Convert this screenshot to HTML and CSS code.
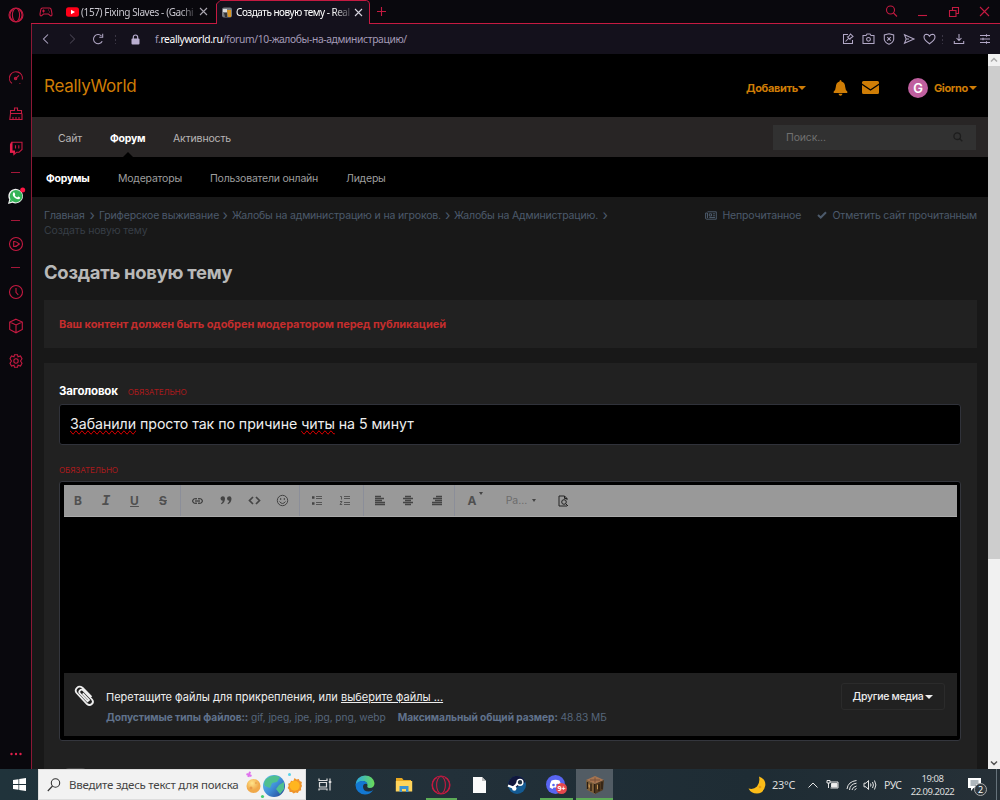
FILE: index.html
```html
<!DOCTYPE html>
<html lang="ru">
<head>
<meta charset="utf-8">
<title>Создать новую тему - ReallyWorld</title>
<link rel="stylesheet" href="styles.css">
</head>
<body>
<div class="desktop">
<div class="browser">
  <aside class="sidebar">
    <svg class="s" width="16" height="16" viewBox="0 0 16 16"><circle cx="8" cy="8" r="7"/><ellipse cx="8" cy="8" rx="3.6" ry="6.8"/><path d="M5 2.2A7 7 0 0 0 5 13.8M11 2.2A7 7 0 0 1 11 13.8" /></svg>
    <span></span>
    <svg class="s" width="16" height="16" viewBox="0 0 16 16"><path d="M4 13.4A6.5 6.5 0 1 1 14.3 9.5M11.5 13.5h.8M7.3 8.8 11 5.4"/><circle cx="7.6" cy="8.5" r="1.2"/></svg>
    <svg class="s" width="16" height="16" viewBox="0 0 16 16"><path d="M2.5 7.5V4.5H6.5V2H9.5V4.5H13.5V7.5ZM2.5 7.5 1.8 13.5H14V7.5M5 13.5V11M8 13.5V11M11 13.5V11"/></svg>
    <svg class="s" width="16" height="16" viewBox="0 0 16 16"><path d="M3.500 2.300H14V9.500L11 12.300H8.500L6 14.600V12.300H2.500V4.500Z"/><path class="fillred" d="M2 4.300 4.500 1.800V10.500H7V12.500L5.500 15V12.800H2Z"/><path d="M7.500 5.300V8.500M10.800 5.300V8.500"/></svg>
    <i class="dash"></i>
    <svg width="18" height="18" viewBox="0 0 18 18"><path d="M1 17 2.2 12.6A7.3 7.3 0 1 1 5.4 15.7Z" fill="#eee"/><circle cx="9" cy="9.2" r="6.2" fill="#34b457"/><path d="M2.5 15.3 3.6 12 5.5 14.4Z" fill="#34b457"/><path d="M6.2 5.7q1-1 1.7.9t-.2 1.6q1 1.8 2.6 2.3.8-1.3 1.6-.8 1.8.8 1.2 1.5-1.3 2-4.7 0Q4.600 8.500 6.200 5.700" fill="#fff"/><circle cx="15.7" cy="3" r="2.500" fill="#ff1744"/></svg>
    <i class="dash"></i>
    <svg class="s" width="16" height="16" viewBox="0 0 16 16"><circle cx="8" cy="8" r="6.500"/><path d="M5.700 5.500Q8 5 11.300 8 8 11 5.700 10.500Z"/></svg>
    <i class="dash"></i>
    <svg class="s" width="16" height="16" viewBox="0 0 16 16"><circle cx="8" cy="8" r="6.500"/><path d="M8 4V8.300L10.300 11"/></svg>
    <svg class="s" width="16" height="16" viewBox="0 0 16 16"><path d="M8 1.200 14.300 4V11.500L8 14.800 1.700 11.500V4ZM1.700 4 8 7 14.300 4M8 7V14.800"/></svg>
    <svg class="s" width="16" height="16" viewBox="0 0 16 16"><path d="M6.500 1.700H9.500L10 3.700 12.500 3 14 5.700 12.500 8 14 10.300 12.500 13 10 12.300 9.500 14.300H6.500L6 12.300 3.500 13 2 10.300 3.500 8 2 5.700 3.500 3 6 3.700Z"/><circle cx="8" cy="8" r="2.200"/></svg>
    <span></span>
    <svg width="14" height="4" viewBox="0 0 14 4" fill="#e0204b"><circle cx="2.500" cy="2" r="1.200"/><circle cx="7" cy="2" r="1.200"/><circle cx="11.500" cy="2" r="1.200"/></svg>
  </aside>

  <div class="window">
    <div class="tabs">
      <svg class="s pad" width="14" height="12" viewBox="0 0 14 12"><path d="M3.500 2H10.500Q12 2 12.300 4L13 8Q13 10.300 11.500 9.800L9.500 8H4.500L2.500 9.800Q1 10.300 1 8L1.700 4Q2 2 3.500 2ZM4.500 3.500V6.500M3 5H6M9 4h.8M10 6h.8"/></svg>
      <svg class="yt" width="13" height="10" viewBox="0 0 13 10"><rect width="13" height="9.500" y=".2" rx="2.500" fill="#ff0018"/><path d="M5 2.700 9 5 5 7.300Z" fill="#fff"/></svg>
      <span class="tab-title fade1">(157) Fixing Slaves - (Gachi</span>
      <svg class="x" width="9" height="9" viewBox="0 0 9 9"><path d="M1 1 8 8M8 1 1 8"/></svg>
      <div class="tab-active">
        <svg class="edge" width="155" height="24" viewBox="0 0 155 24"><path d="M.5 24V4L4 .5H150.500Q153.500 1 153.500 4V24" fill="#14111c" stroke="#c51a41"/></svg>
        <svg class="fav" width="10" height="11" viewBox="0 0 10 11"><rect width="10" height="10" y=".5" rx="2" fill="#777a80"/><path d="M1 2H5V5H1Z" fill="#ddd"/><path d="M5 3H9V10H6Z" fill="#d99522"/><path d="M2 6H5V10H3Z" fill="#333"/></svg>
        <span class="tab-title on">Создать новую тему - Real</span>
        <svg class="x" width="9" height="9" viewBox="0 0 9 9"><path d="M1 1 8 8M8 1 1 8"/></svg>
      </div>
      <svg class="s plus" width="11" height="11" viewBox="0 0 11 11"><path d="M5.500 1V10M1 5.500H10"/></svg>
      <div class="wincontrols">
        <svg class="s" width="13" height="13" viewBox="0 0 13 13"><circle cx="5.500" cy="5" r="4"/><path d="M8.500 8 12 11.500"/></svg>
        <svg class="s" width="11" height="13" viewBox="0 0 11 13"><path d="M1 10.500H10"/></svg>
        <svg class="s" width="12" height="12" viewBox="0 0 12 12"><path d="M1.500 4.500H8V10.500H1.500ZM4.500 4V1.500H10.500V7.500H8.500"/></svg>
        <svg class="s" width="11" height="11" viewBox="0 0 11 11"><path d="M1 1 10 10M10 1 1 10"/></svg>
      </div>
    </div>

    <div class="view">
      <div class="address">
        <svg class="a" width="12" height="12" viewBox="0 0 12 12"><path d="M8 1.500 3.500 6 8 10.500"/></svg>
        <svg class="a dim" width="12" height="12" viewBox="0 0 12 12"><path d="M4 1.500 8.500 6 4 10.500"/></svg>
        <svg class="a" width="12" height="12" viewBox="0 0 12 12"><path d="M10.200 8.200A4.600 4.600 0 1 1 9.500 3M10.700 .8V4.200H7.300"/></svg>
        <i class="vdots"></i>
        <svg width="9" height="11" viewBox="0 0 9 11"><path d="M2.300 5V3.200Q2.300 1 4.500 1T6.700 3.200V5" fill="none" stroke="#b9aed0" stroke-width="1.200"/><rect x=".5" y="4.500" width="8" height="6" rx="1" fill="#b9aed0"/></svg>
        <span class="url">f.<b>reallyworld.ru</b>/forum/10-жалобы-на-администрацию/</span>
        <svg class="a" width="12" height="12" viewBox="0 0 12 12"><path d="M6 1.500H1.500V10.500H10.500V7M3.500 8.500 6.500 5.500M5 3.500 8.500 7M6 4.500 8.500 1 11 3.500 7.500 6"/></svg>
        <svg class="a" width="13" height="12" viewBox="0 0 13 12"><path d="M1 2.500H4L5 1H8L9 2.500H12V10.500H1Z"/><circle cx="6.500" cy="6.300" r="1.900"/></svg>
        <svg class="a" width="12" height="12" viewBox="0 0 12 12"><path d="M6 .8 10.700 2V6.500Q10.200 9.500 6 11.300 1.800 9.500 1.300 6.500V2ZM4.200 4 7.800 7.600M7.800 4 4.200 7.600"/></svg>
        <svg class="a" width="12" height="12" viewBox="0 0 12 12"><path d="M1.500 1.700 11 6 1.500 10.300 3.200 6ZM3.200 6H6"/></svg>
        <svg class="a" width="13" height="12" viewBox="0 0 13 12"><path d="M6.500 10.800Q1 7 1 4 1 1.300 3.500 1.200 5.500 1.200 6.500 3.200 7.500 1.200 9.500 1.200 12 1.300 12 4 12 7 6.500 10.800Z"/></svg>
        <i class="vdots"></i>
        <svg class="a" width="12" height="12" viewBox="0 0 12 12"><path d="M6 1V7.500M3.500 5 6 7.500 8.500 5M1.300 8V10.500H10.700V8"/></svg>
        <svg class="a" width="12" height="12" viewBox="0 0 12 12"><path d="M1 2.500H11M1 6H11M1 9.500H11M7.500 1.300V3.700M4 4.800V7.200M7.500 8.300V10.700"/></svg>
      </div>

      <div class="viewport">
        <div class="page">
          <header class="head">
            <a class="logo">ReallyWorld</a>
            <span class="add">Добавить</span><i class="caret"></i>
            <svg class="bell" width="15" height="16" viewBox="0 0 15 16" fill="#cf7d06"><path d="M7.500 0Q8.500 0 8.500 1.500 12 2.300 12.200 7 12.400 10 14.300 11.500V13H.7V11.500Q2.600 10 2.800 7 3 2.300 6.500 1.500 6.500 0 7.500 0ZM5.500 13.800H9.500Q9 15.800 7.500 15.800T5.500 13.800Z"/></svg>
            <svg class="mail" width="17" height="13" viewBox="0 0 17 13" fill="#cf7d06"><path d="M1.500 0H15.500Q17 0 17 1.500V2.500L8.500 8.200 0 2.500V1.500Q0 0 1.500 0ZM0 4 8.500 9.700 17 4V11.500Q17 13 15.500 13H1.500Q0 13 0 11.500Z"/></svg>
            <span class="avatar">G</span>
            <span class="user">Giorno</span><i class="caret"></i>
          </header>
          <nav class="nav">
            <a>Сайт</a><a class="sel">Форум</a><a class="act">Активность</a>
            <div class="search"><span>Поиск...</span><svg width="10" height="10" viewBox="0 0 10 10"><circle cx="4.200" cy="4.200" r="3.300"/><path d="M6.700 6.700 9.300 9.300"/></svg></div>
          </nav>
          <nav class="subnav"><a class="sel">Форумы</a><a>Модераторы</a><a>Пользователи онлайн</a><a>Лидеры</a></nav>

          <div class="content">
            <div class="crumbbar">
              <div class="crumbs">
                <span class="c1">Главная</span><i>›</i><span class="c2">Гриферское выживание</span><i>›</i><span class="c3">Жалобы на администрацию и на игроков.</span><i>›</i><span class="c4">Жалобы на Администрацию.</span><i>›</i>
                <span class="here">Создать новую тему</span>
              </div>
              <svg class="news" width="12" height="9" viewBox="0 0 12 9"><path d="M2.500 .8H11.300V8.200H1.500Q.6 8.200 .6 7V2H2.500V7M4.300 2.800H6.500V5H4.300ZM7.800 2.800H10M7.800 4.800H10M4.300 6.500H10"/></svg>
              <span class="unread">Непрочитанное</span>
              <svg class="check" width="10" height="8" viewBox="0 0 10 8"><path d="M1 4 3.700 6.500 9 1.200"/></svg>
              <span class="markread">Отметить сайт прочитанным</span>
            </div>
            <h1>Создать новую тему</h1>
            <div class="notice">Ваш контент должен быть одобрен модератором перед публикацией</div>
            <form class="form">
              <div class="label"><b>Заголовок</b><em>ОБЯЗАТЕЛЬНО</em></div>
              <div class="title-input"><u>Забанили</u> просто так по причине <u>читы</u> на 5 минут</div>
              <div class="label second"><em>ОБЯЗАТЕЛЬНО</em></div>
              <div class="editor">
                <div class="tools">
                  <b class="t">B</b><b class="t it">I</b><b class="t un">U</b><b class="t st">S</b>
                  <svg class="sep k" width="11" height="6" viewBox="0 0 11 6"><path d="M5 .8H2.500Q.7 .8 .7 3T2.500 5.200H5M6 .8H8.500Q10.300 .8 10.300 3T8.500 5.200H6M3 3H8" stroke="#222" stroke-width="1"/></svg>
                  <svg width="12" height="9" viewBox="0 0 12 9" fill="#444"><path d="M.5 2.700A2.200 2.200 0 1 1 5 2.500Q5 6.500 1.500 8.300L1 7.500Q2.800 6 2.800 4.800 .7 4.800 .5 2.700ZM7 2.700A2.200 2.200 0 1 1 11.500 2.500Q11.500 6.500 8 8.300L7.500 7.500Q9.300 6 9.300 4.800 7.200 4.800 7 2.700Z"/></svg>
                  <svg class="k" width="13" height="9" viewBox="0 0 13 9"><path d="M5 1 1.500 4.500 5 8M8 1 11.500 4.500 8 8" stroke-width="1.700"/></svg>
                  <svg class="k" width="13" height="13" viewBox="0 0 13 13"><circle cx="6.500" cy="6.500" r="5.200"/><path d="M4.700 4V6M8.300 4V6M3.500 7.500Q6.500 11.500 9.500 7.500"/></svg>
                  <svg class="k sep" width="12" height="11" viewBox="0 0 12 11"><path d="M5 1.500H11M5 3.500H11M5 7.500H11M5 9.500H11" stroke-width=".8"/><path d="M1 2.500H3.500M1 8.500H3.500" stroke-width="2.500"/></svg>
                  <svg class="k" width="12" height="11" viewBox="0 0 12 11"><path d="M5 1.500H11M5 3.500H11M5 7.500H11M5 9.500H11M1.200 1.500H2.500V4.500M1 6.500H3L1 9.500H3.200" stroke-width=".8"/></svg>
                  <svg class="k bars sep" width="10" height="9" viewBox="0 0 10 9"><path d="M0 .5H6M0 2.500H9M0 4.500H7M0 6.500H10M0 8.500H10"/></svg>
                  <svg class="k bars" width="10" height="9" viewBox="0 0 10 9"><path d="M2 .5H8M0 2.500H10M2 4.500H8M0 6.500H10M2 8.500H8"/></svg>
                  <svg class="k bars" width="10" height="9" viewBox="0 0 10 9"><path d="M4 .5H10M1 2.500H10M3 4.500H10M0 6.500H10M0 8.500H10"/></svg>
                  <span class="sep color"><b class="t">A</b><i></i></span>
                  <span class="para">Pa...<i></i></span>
                  <svg class="k" width="11" height="12" viewBox="0 0 11 12"><path d="M9 11H1V1H6.500L9 3.500V5M6.500 1V3.500H9" stroke="#222"/><circle cx="6" cy="7" r="2.300" stroke="#222"/><path d="M7.700 8.700 10 11" stroke="#222"/></svg>
                </div>
                <div class="body"></div>
                <div class="attach">
                  <svg class="clip" width="21" height="22" viewBox="0 0 21 22"><path d="M17.500 12 8.500 2.800Q5.500 .5 3 2.800T2.700 8L13 19Q15.500 21 17.800 19T18 14.500L9.200 5.300Q7.400 4 6 5.300T5.800 8.300L13.500 16.300 15 15 8.700 8.300"/></svg>
                  <div class="attext">
                    <div class="drop">Перетащите файлы для прикрепления, или <u>выберите файлы ...</u></div>
                    <div class="types"><span class="ty"><b>Допустимые типы файлов::</b> gif, jpeg, jpe, jpg, png, webp</span><span><b>Максимальный общий размер:</b> 48.83 МБ</span></div>
                  </div>
                  <div class="media">Другие медиа<i class="caret"></i></div>
                </div>
              </div>
              <div class="toggle"></div>
            </form>
          </div>
        </div>
        <div class="scroll"><svg width="12" height="12" viewBox="0 0 12 12"><path d="M3 7.500 6 4.500 9 7.500" stroke="#aaa"/></svg><div class="thumb"></div><svg class="down" width="12" height="12" viewBox="0 0 12 12"><path d="M3 4.500 6 7.500 9 4.500" stroke="#555"/></svg></div>
      </div>
    </div>
  </div>
</div>

<footer class="taskbar">
  <div class="cell"><svg width="13" height="13" viewBox="0 0 13 13" fill="#fff"><path d="M0 2 5.500 1.200V6.100H0ZM6.200 1.100 13 0V6.100H6.200ZM0 6.900H5.500V11.800L0 11ZM6.200 6.900H13V13L6.200 11.900Z"/></svg></div>
  <div class="tsearch">
    <svg width="14" height="14" viewBox="0 0 14 14" fill="none" stroke="#333" stroke-width="1.100"><circle cx="8.500" cy="5" r="4.200"/><path d="M5.500 8 .8 13"/></svg>
    <span>Введите здесь текст для поиска</span>
    <svg class="planets" width="56" height="28" viewBox="0 0 56 28"><defs><radialGradient id="y" cx=".4" cy=".3"><stop offset="0" stop-color="#ffe48a"/><stop offset="1" stop-color="#f0a94a"/></radialGradient><linearGradient id="e" x1="0" x2="1" y2="1"><stop offset="0" stop-color="#6ac8ec"/><stop offset=".5" stop-color="#3f8fd8"/><stop offset="1" stop-color="#243f90"/></linearGradient></defs><circle cx="7.500" cy="15" r="7" fill="url(#y)"/><circle cx="5" cy="17" r="1.500" fill="#e89a48"/><circle cx="10" cy="12" r="1.200" fill="#edaa52"/><circle cx="28" cy="15" r="11" fill="url(#e)"/><path d="M20 8Q27 2 34 6L31 11 26 12 24 17 19 15Q17 12 20 8ZM33 14 38 11 38 18 34 23 30 18Z" fill="#4fc08f"/><path d="m48.500 7 2 1.400 2.300-.5.9 2.200 2.200.9-.5 2.300L56 15l-1 2 .2 2.300-2.300.6-1 2-2.300-.5-2 1.200-1.700-1.500-2.300-.1-.4-2.300-1.600-1.600 1.100-2.100-.6-2.200 2-.9.9-2.200 2.300.2Z" fill="#ef942b"/><circle cx="48.700" cy="14.800" r="5" fill="#ffb51f"/><path d="M.5 3 5.500 5M4 .8 2.300 6" stroke="#df72ed" stroke-width="2"/><circle cx="43.500" cy="3.500" r="1.500" fill="#55d2e8"/><circle cx="16.500" cy="25.500" r="1.600" fill="#44cf72"/></svg>
  </div>
  <div class="cell"><svg width="14" height="13" viewBox="0 0 14 13" fill="none" stroke="#ddd" stroke-width="1.200"><path d="M1 .5V2.500H9V.5M1.500 4.500H8.500V9H1.500ZM1 12.500V11H9V12.500M12 .5V12.500"/><path d="M10.800 4H13.300" stroke-width="2"/></svg></div>
  <div class="cell"><svg width="20" height="20" viewBox="0 0 20 20"><defs><linearGradient id="g" x1="0" x2="1"><stop offset="0" stop-color="#2aa8e8"/><stop offset="1" stop-color="#6bdc55"/></linearGradient></defs><path d="M.5 10A9.500 9.500 0 0 1 10 .5Q18 .8 19.500 8 19.500 13 14.500 13 11.500 12.800 12.500 10.500 12.500 6.500 8 6 3 6.500 .5 10Z" fill="url(#g)"/><path d="M.5 10Q3 5.500 8 6 11.500 6.300 12.400 9 8 8 8 12 8.500 16.500 13.500 16.500 16 16.500 18.300 15 15 19.500 10 19.500A9.500 9.500 0 0 1 .5 10Z" fill="#1378d2"/></svg></div>
  <div class="cell"><svg width="18" height="16" viewBox="0 0 18 16"><path d="M1 1H7L8.500 3H16V8H1Z" fill="#e9a820"/><rect x=".8" y="4" width="16.400" height="10.500" fill="#ffd45b"/><path d="M4.500 9H13.500V15H11V12H7V15H4.500Z" fill="#3c93d2"/></svg></div>
  <div class="cell run"><svg class="s" width="20" height="20" viewBox="0 0 20 20"><circle cx="10" cy="10" r="9"/><ellipse cx="10" cy="10" rx="4.400" ry="8.500"/><path d="M6 2.500A8.500 8.500 0 0 0 6 17.500M14 2.500A8.500 8.500 0 0 1 14 17.500"/></svg></div>
  <div class="cell"><svg width="13" height="16" viewBox="0 0 13 16"><path d="M0 0H9L13 4V16H0Z" fill="#fafafa"/><path d="M9 0V4H13Z" fill="#bbb"/></svg></div>
  <div class="cell"><svg width="18" height="18" viewBox="0 0 18 18"><circle cx="9" cy="9" r="9" fill="#145a92"/><path d="M0 9A9 9 0 0 1 17.500 6L9 11Z" fill="#11173d"/><path d="M0 9.500 5 11.500 8 9 10 6.500" stroke="#fff" stroke-width="2.200" fill="none"/><circle cx="12" cy="6.300" r="2.900" fill="#234" stroke="#fff" stroke-width="1.400"/><circle cx="6.300" cy="12.500" r="2.200" fill="#fff"/></svg></div>
  <div class="cell run disc"><svg width="20" height="20" viewBox="0 0 20 20"><circle cx="9.500" cy="9.500" r="9.500" fill="#5865f2"/><path d="M5.500 5.500Q9.500 4 13.500 5.500 15.500 9 15.300 12.500L12.500 14 11.500 12.500H7.500L6.500 14 3.700 12.500Q3.500 9 5.500 5.500Z" fill="#fff"/><circle cx="7.500" cy="10" r="1.300" fill="#5865f2"/><circle cx="11.500" cy="10" r="1.300" fill="#5865f2"/></svg><span class="badge">9+</span></div>
  <div class="cell run cur"><svg width="20" height="20" viewBox="0 0 20 20"><path d="M10 1 19 5 10 9 1 5Z" fill="#a77550"/><path d="M1 5 10 9V19L2 15Z" fill="#806039"/><path d="M19 5 10 9V19L18 15Z" fill="#51391f"/><path d="M2.500 7V14M6 8.500V16M9.500 9V18M14 9V16M17 7V14" stroke="#2a1d12" stroke-width="1.300"/><path d="M3.500 9 5 10V13L3.500 12ZM12 10 13 9.500V14L12 14.500Z" fill="#c09050"/><path d="M5 5H15M10 2.500V7.500" stroke="#77503a"/></svg></div>
  <div class="cell moon"><svg width="18" height="18" viewBox="0 0 18 18"><path d="M11 .5Q18 3 17.300 9.500 16 17 9 17.500 3 17.500 .5 12.500 5.500 14 9 10.500 12.300 6.500 11 .5Z" fill="#fbbc18"/><circle cx="12" cy="11" r="1.300" fill="#e99c11"/></svg></div>
  <span class="temp">23°C</span>
  <div class="cell"><svg class="w" width="12" height="8" viewBox="0 0 12 8"><path d="M1.500 6.500 6 2 10.500 6.500"/></svg></div>
  <div class="cell"><svg class="w" width="13" height="11" viewBox="0 0 13 11"><path d="M4 3H12V9H4.500M1 1.500H4V4H1ZM2.500 4V9"/><path d="M5.500 4.500H11V8H5.500Z" fill="#eee"/></svg></div>
  <div class="cell"><svg class="w" width="12" height="12" viewBox="0 0 12 12"><path d="M1 10Q2 2.500 10.500 1.500M3.500 11Q4 5 10.500 4.200M6 11Q6.500 8 10.500 7M8.500 11 10.500 9.500"/></svg></div>
  <div class="cell"><svg class="w" width="14" height="12" viewBox="0 0 14 12"><path d="M1 4.200H3L5.500 1.500V10.500L3 7.800H1ZM7.500 4.500Q8.500 6 7.500 7.500M9.500 3Q11.300 6 9.500 9M11.500 1.500Q14.300 6 11.500 10.500"/></svg></div>
  <span class="lang">РУС</span>
  <div class="clock"><span>19:08</span><span>22.09.2022</span></div>
  <div class="cell note"><svg width="13" height="14" viewBox="0 0 13 14"><path d="M0 0H13V10H5.500L3 13V10H0Z" fill="#fff"/><path d="M2.500 3H10.500M2.500 5H10.500M2.500 7H8" stroke="#60717a"/></svg><span class="count">2</span></div>
  <i class="peek"></i>
</footer>
</div>
</body>
</html>
```

FILE: styles.css
```css
* { box-sizing: border-box; }
body { margin: 0; background: #000; font-family: Inter, "Noto Sans", sans-serif; font-size: 11px; overflow: hidden; }
i, em { font-style: normal; }
svg { display: block; flex: none; overflow: visible; }
.desktop { width: 1000px; height: 800px; display: grid; grid-template-rows: 769px 31px; overflow: hidden; white-space: nowrap; }
.browser { display: grid; grid-template-columns: 31px 969px; background: #09080d; min-height: 0; }
.s { fill: none; stroke: #c51a41; stroke-width: 1.1; }
.fillred { fill: #e81e4c; stroke: none; }

/* Sidebar */
.sidebar { display: grid; grid-template-rows: 30px 30px 36px 36px 32px 16px 32px 16px 31px 16px 33px 36px 34px 360px 31px; place-items: center; }
.dash { width: 9px; height: 1px; background: #a51739; }

/* Tabs */
.window { min-width: 0; display: grid; grid-template-rows: 24px 745px; }
.tabs { display: flex; align-items: center; border-bottom: 1px solid #c51a41; font: 10px "Noto Sans", sans-serif; color: #c9c7cf; padding-left: 8px; }
.tabs .yt { margin-left: 13px; }
.fade1 { width: 113px; margin-left: 2px; letter-spacing: -.4px; -webkit-mask-image: linear-gradient(90deg, #000 88%, #0004); }
.x { fill: none; stroke: #aaa7b1; stroke-width: 1.1; margin-left: 5px; }
.tab-active { position: relative; width: 155px; height: 24px; margin: 0 0 -1px 8px; display: flex; align-items: center; color: #fff; }
.tab-active > * { position: relative; }
.tab-active .edge { position: absolute; left: 0; top: 0; }
.fav { margin-left: 6px; }
.on { width: 114px; margin-left: 4px; letter-spacing: -.5px; -webkit-mask-image: linear-gradient(90deg, #000 85%, #0003); }
.tab-active .x { margin-left: 4px; stroke: #d7d4df; }
.plus { margin-left: 5px; }
.wincontrols { margin-left: auto; display: grid; grid-template-columns: 31px 31px 31px 31px; place-items: center; }

/* Address bar */
.view { border-left: 1px solid #8c1835; display: grid; grid-template-rows: 30px 715px; min-width: 0; }
.address { background: #14111c; display: grid; grid-template-columns: 28px 24px 28px 6px 34px 1fr 19px 22px 19px 22px 18px 8px 26px 26px; padding-right: 2px; align-items: center; justify-items: center; }
.a { fill: none; stroke: #b2a8c6; stroke-width: 1.05; }
.dim { stroke: #46414f; }
.vdots { width: 1px; height: 9px; background: repeating-linear-gradient(#3a3644 0 2px, transparent 2px 4px); }
.url { justify-self: start; padding-left: 3px; font: 10.3px "Noto Sans", sans-serif; letter-spacing: -.36px; color: #a49bb7; }
.url b { font-weight: 400; color: #fff; }

/* Forum */
.viewport { display: grid; grid-template-columns: 956px 12px; background: #181818; min-height: 0; }
.page { min-width: 0; overflow: hidden; height: 715px; }
.head { height: 63px; background: #000; display: flex; align-items: center; padding: 4px 10px 0 12px; color: #cf7d06; font-weight: 700; }
.logo { font-size: 17px; font-weight: 400; width: 702px; letter-spacing: -.28px; padding-bottom: 3px; }
.add { width: 52px; letter-spacing: -.35px; }
.caret { border: 4px solid transparent; border-top: 4.5px solid currentColor; border-bottom: 0; flex: none; }
.bell { margin-left: 27px; }
.mail { margin-left: 14px; }
.avatar { width: 20px; height: 20px; margin-left: 29px; border-radius: 50%; background: #c05f9f; color: #fff; font-size: 13px; font-weight: 600; text-align: center; line-height: 20px; }
.user { margin-left: 6px; width: 35px; letter-spacing: -.4px; }
.nav { height: 40px; background: #282525; display: grid; grid-template-columns: 52px 63px 1fr 203px; padding: 0 12px 0 26px; align-items: center; color: #b8b5b5; font-size: 10.5px; letter-spacing: -.15px; }
.nav > a { line-height: 37px; padding-top: 3px; }
.sel { color: #fff; font-weight: 700; letter-spacing: -.25px; }
.nav .sel { position: relative; }
.nav .sel::after { content: ""; position: absolute; left: 13px; bottom: 0; border: 5px solid transparent; border-top: 0; border-bottom-color: #000; }
.search { height: 25px; background: #313131; display: flex; align-items: center; justify-content: space-between; padding: 0 13px; color: #707070; }
.search svg { fill: none; stroke: #1d1d1d; stroke-width: 1.3; }
.subnav { height: 40px; background: #000; display: grid; grid-template-columns: 72px 92px 136px 1fr; padding: 2px 0 0 14px; align-items: center; color: #9e9e9e; font-size: 10.5px; letter-spacing: -.22px; }
.content { padding: 11px 11px 0 12px; }
.crumbbar { height: 45px; display: flex; align-items: flex-start; color: #4c5a6b; line-height: 15px; font-size: 10.5px; letter-spacing: -.17px; }
.crumbs { width: 662px; display: grid; grid-template-columns: 41px 14px 119px 14px 209px 13px 144px 14px; }
.crumbs i { text-align: center; font-size: 14px; line-height: 13px; }
.here { grid-column: 1 / -1; color: #373e46; }
.news, .check { fill: none; stroke: #4c5a6b; margin-top: 3px; }
.check { stroke-width: 2; margin-left: 17px; }
.unread { margin-left: 5px; width: 78px; }
.markread { margin-left: 5px; }
h1 { margin: 0; height: 47px; font-size: 18.4px; line-height: 38px; color: #b8b8b8; font-weight: 700; letter-spacing: -.25px; }
.notice { height: 48px; background: #212121; padding-left: 15px; line-height: 48px; color: #c42d2d; font-weight: 700; letter-spacing: -.05px; }
.form { margin-top: 15px; height: 406px; background: #212121; padding: 20px 16px 0 15px; overflow: hidden; }
.label { height: 21px; line-height: 17px; color: #fff; font-size: 11.5px; letter-spacing: -.2px; }
.label em { color: #a81a1c; font-size: 8.2px; letter-spacing: -.17px; }
.label b + em { margin-left: 10px; }
.title-input { height: 41px; background: #000; border: 1px solid #30323a; border-radius: 3px; padding-left: 10px; font-size: 14.2px; letter-spacing: -.05px; line-height: 38px; color: #eee; }
.title-input u { text-decoration: spelling-error; }
.second { height: 36px; line-height: 48px; }
.editor { height: 260px; border: 1px solid #34363d; border-radius: 3px; background: #000; padding: 3px 3px 4px 4px; display: grid; grid-template-rows: 32px 1fr 63px; }
.tools { background: linear-gradient(#8b8e99, #8b8e99) 116px 0, linear-gradient(#8b8e99, #8b8e99) 235px 0, linear-gradient(#8b8e99, #8b8e99) 299px 0, linear-gradient(#8b8e99, #8b8e99) 390px 0; background-color: #999; background-size: 1px 100%; background-repeat: no-repeat; border-bottom: 1px solid #aaa; display: grid; grid-template-columns: 28px 28px 29px 28px 34px 29px 28px 28px 35px 28px 35px 28px 29px 35px 62px 30px; place-items: center; color: #505050; }
.t { font-size: 12px; }
.it { font-style: italic; font-family: "Liberation Mono", monospace; font-size: 14px; }
.un { text-decoration: underline; }
.st { text-decoration: line-through; }
.k { fill: none; stroke: #444; }
.bars { stroke-width: 1.4; }
.tools .sep { position: relative; margin-left: 7px; }
.color { display: flex; }
.color i, .para i { border: 2px solid transparent; border-top: 3px solid #444; border-bottom: 0; }
.color i { position: absolute; left: 11px; top: -1px; }
.para { display: flex; align-items: center; gap: 5px; color: #6c6c6c; font-size: 10.5px; margin-left: 8px; }
.attach { background: #212121; display: flex; padding: 10px 12px 0 10px; color: #eee; }
.clip { fill: none; stroke: #eee; stroke-width: 1.8; margin-top: 2px; }
.attext { margin-left: 11px; }
.drop { line-height: 28px; letter-spacing: -.01px; }
.types { color: #56667b; font-size: 10.2px; letter-spacing: -.06px; line-height: 12px; display: flex; gap: 12px; }
.types b { color: #60728c; }
.media { margin-left: auto; width: 104px; height: 27px; border: 1px solid #2b2b2b; border-radius: 3px; display: flex; align-items: center; justify-content: center; color: #eee; font-size: 10.5px; letter-spacing: -.3px; font-weight: 500; gap: 2px; }
.toggle { margin: 27px 0 0 4px; width: 25px; height: 12px; border-radius: 6px; background: #444; }

/* Scrollbar */
.scroll { background: #f1f1f1; display: flex; flex-direction: column; }
.scroll svg { fill: none; stroke-width: 1.5; }
.thumb { height: 493px; background: #cdcdcd; }
.down { margin-top: auto; }

/* Taskbar */
.taskbar { background: linear-gradient(90deg, #20333b, #223039 45%, #1e2c34 75%, #263037); display: grid; grid-template-columns: 38px 268px 38px 41px 37px 38px 38px 38px 40px 37px 153px 36px 22px 16px 23px 14px 26px 58px 30px 1fr; align-items: center; color: #ddd; font-family: "Noto Sans", sans-serif; }
.cell { height: 31px; display: grid; place-items: center; position: relative; }
.tsearch { height: 31px; background: #f2f2f2; border: 1px solid #ddd; display: flex; align-items: center; padding: 0 2px 0 8px; color: #444; font: 11.5px "Noto Sans", sans-serif; }
.tsearch span { margin-left: 8px; width: 171px; letter-spacing: -.24px; }
.planets { margin-left: 6px; }
.run::after { content: ""; position: absolute; left: 4px; right: 3px; bottom: 0; height: 2px; background: #5cab56; }
.cur { background: #525c64; }
.cur::after { left: 0; right: 0; }
.badge { position: absolute; left: 20px; top: 14px; width: 11px; height: 11px; border-radius: 50%; background: #e5484d; color: #fff; font-size: 7px; font-weight: 700; line-height: 11px; text-align: center; }
.moon { justify-items: end; }
.temp { padding-left: 6px; font-size: 11px; letter-spacing: -.3px; }
.w { fill: none; stroke: #e6e6e6; }
.lang { font-size: 10.5px; padding-left: 7px; letter-spacing: -.5px; }
.clock { display: grid; text-align: center; font-size: 9.5px; line-height: 13px; letter-spacing: -.5px; padding-left: 1px; }
.note { padding: 0 4px 0 0; }
.count { position: absolute; left: 13px; top: 14px; width: 13px; height: 13px; border: 1px solid #aaa; border-radius: 50%; background: #30393f; color: #fff; font-size: 9px; line-height: 11px; text-align: center; }
.peek { height: 31px; width: 1px; margin-left: 5px; background: #66727a; }
```
